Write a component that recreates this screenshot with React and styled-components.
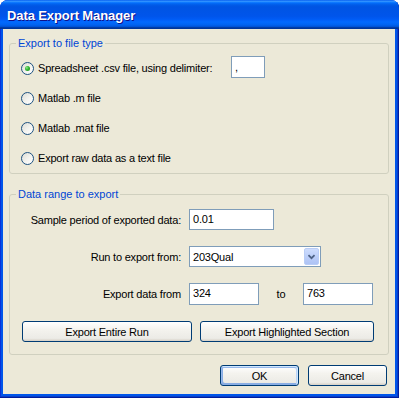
import React from "react";
import styled, { createGlobalStyle } from "styled-components";

const Global = createGlobalStyle`
  html, body { margin: 0; padding: 0; background: #ffffff; }
  body { font-family: "Liberation Sans", Tahoma, Arial, sans-serif; font-size: 11px; color: #000; }
  * { box-sizing: border-box; }
`;

const Window = styled.div`
  width: 399px;
  height: 398px;
  display: flex;
  flex-direction: column;
  border-radius: 8px 8px 0 0;
  overflow: hidden;
  background: #0055ea;
  box-shadow: inset -1px -1px #001c9c, inset 1px 0 #0831d9, inset -2px -2px #0a3fc8;
`;

const TitleBar = styled.div`
  height: 29px;
  flex-shrink: 0;
  display: flex;
  align-items: center;
  padding: 2px 0 0 7px;
  background: linear-gradient(
    180deg,
    #0058ee 0%, #3593ff 4%, #288eff 6%, #127dff 8%, #036ffc 10%,
    #0262ee 14%, #0057e5 20%, #0054e3 24%, #0055eb 56%, #005bf5 66%,
    #026afe 76%, #0062ef 86%, #0052d6 92%, #0040ab 94%, #003092 100%
  );
`;

const Title = styled.span`
  font-family: "Liberation Sans", "Trebuchet MS", sans-serif;
  font-weight: bold;
  font-size: 13px;
  letter-spacing: -0.1px;
  color: #ffffff;
  text-shadow: 1px 1px #0f1089;
`;

const Client = styled.div`
  flex: 1;
  margin: 0 4px 4px 3px;
  background: #ece9d8;
  padding: 8px 6px 0 6px;
  display: flex;
  flex-direction: column;
`;

const Group = styled.fieldset`
  margin: 0 0 ${(p) => p.$mb || 0}px 0;
  padding: 0;
  min-width: 0;
  border: 1px solid #d0d0bf;
  border-radius: 3px;
`;

const Legend = styled.legend`
  margin-left: 6px;
  padding: 0 2px;
  line-height: 13px;
  font-size: 11px;
  color: #0046d5;
`;

const OptionList = styled.div`
  display: flex;
  flex-direction: column;
  gap: 10px;
  padding: 8px 0 5px 11px;
`;

const OptionRow = styled.div`
  height: 20px;
  display: flex;
  align-items: center;
`;

const Option = styled.label`
  display: flex;
  align-items: center;
  gap: 4px;
  flex-shrink: 0;
  width: ${(p) => p.$width || "auto"};
  letter-spacing: -0.2px;
  white-space: nowrap;
`;

const Radio = styled.span`
  position: relative;
  width: 13px;
  height: 13px;
  flex-shrink: 0;
  border-radius: 50%;
  border: 1px solid #1c5180;
  background: linear-gradient(135deg, #dcdcd4 0%, #f4f4f0 55%, #ffffff 100%);
  display: flex;
  align-items: center;
  justify-content: center;
  &::after {
    content: "";
    display: ${(p) => (p.$checked ? "block" : "none")};
    width: 5px;
    height: 5px;
    border-radius: 50%;
    background: radial-gradient(circle at 35% 35%, #8ee88e 0%, #2fb42f 45%, #1b8e1b 100%);
  }
`;

const TextBox = styled.div`
  width: ${(p) => p.$w}px;
  height: ${(p) => p.$h || 21}px;
  border: 1px solid #7f9db9;
  background: #ffffff;
  padding: 2px 0 0 3px;
  font-size: ${(p) => p.$fs || 11}px;
  line-height: 15px;
  letter-spacing: -0.2px;
  flex-shrink: 0;
`;

const Delimiter = styled(TextBox)`
  margin-bottom: 3px;
  padding-top: 3px;
`;

const FormGrid = styled.div`
  display: grid;
  grid-template-columns: 171px 1fr;
  column-gap: 8px;
  row-gap: 16px;
  align-items: center;
  padding: 8px 0 12px 0;
`;

const FieldLabel = styled.span`
  text-align: right;
  letter-spacing: -0.2px;
  white-space: nowrap;
`;

const Inline = styled.div`
  display: flex;
  align-items: center;
`;

const ToLabel = styled.span`
  width: 44px;
  text-align: center;
  letter-spacing: -0.2px;
`;

const Combo = styled.div`
  width: 132px;
  height: 21px;
  border: 1px solid #7f9db9;
  background: #ffffff;
  display: flex;
  align-items: center;
  justify-content: space-between;
  padding: 0 1px 0 3px;
  letter-spacing: -0.2px;
`;

const ComboButton = styled.span`
  width: 15px;
  height: 17px;
  border-radius: 2px;
  border: 1px solid #b9cdf6;
  background: linear-gradient(180deg, #cddcfd 0%, #bccff9 50%, #aec3f5 100%);
  display: flex;
  align-items: center;
  justify-content: center;
`;

const ButtonRow = styled.div`
  grid-column: 1 / -1;
  display: flex;
  gap: 8px;
  padding-left: 12px;
`;

const Button = styled.button`
  width: ${(p) => p.$w}px;
  height: 21px;
  padding: 0;
  border: 1px solid #003c74;
  border-radius: 3px;
  background: linear-gradient(180deg, #ffffff 0%, #f4f3ee 40%, #ecebe6 86%, #d6d0c5 100%);
  font-family: "Liberation Sans", Tahoma, sans-serif;
  font-size: 11px;
  letter-spacing: -0.2px;
  color: #000;
  box-shadow: ${(p) =>
    p.$default
      ? "inset -1px 1px #cee7ff, inset 1px 2px #98b8ea, inset -2px 2px #bcd4f6, inset 1px -1px #89ade4, inset 2px -2px #89ade4"
      : "none"};
`;

const Footer = styled.div`
  display: flex;
  justify-content: flex-end;
  gap: 9px;
  margin-top: 10px;
  padding-right: 2px;
`;

const Chevron = () => (
  <svg width="15" height="17" viewBox="0 0 15 17">
    <path d="M4 7 L7.5 10.5 L11 7" fill="none" stroke="#4d6185" strokeWidth="2" />
  </svg>
);

const options = [
  "Matlab .m file",
  "Matlab .mat file",
  "Export raw data as a text file",
];

export default function App() {
  return (
    <>
      <Global />
      <Window>
        <TitleBar>
          <Title>Data Export Manager</Title>
        </TitleBar>
        <Client>
          <Group $mb={14}>
            <Legend>Export to file type</Legend>
            <OptionList>
              <OptionRow>
                <Option $width="210px">
                  <Radio $checked />
                  Spreadsheet .csv file, using delimiter:
                </Option>
                <Delimiter $w={34} $h={22}>,</Delimiter>
              </OptionRow>
              {options.map((o) => (
                <OptionRow key={o}>
                  <Option>
                    <Radio />
                    {o}
                  </Option>
                </OptionRow>
              ))}
            </OptionList>
          </Group>
          <Group>
            <Legend>Data range to export</Legend>
            <FormGrid>
              <FieldLabel>Sample period of exported data:</FieldLabel>
              <TextBox $w={85}>0.01</TextBox>
              <FieldLabel>Run to export from:</FieldLabel>
              <Combo>
                <span>203Qual</span>
                <ComboButton>
                  <Chevron />
                </ComboButton>
              </Combo>
              <FieldLabel>Export data from</FieldLabel>
              <Inline>
                <TextBox $w={70} $h={22}>324</TextBox>
                <ToLabel>to</ToLabel>
                <TextBox $w={70} $h={22}>763</TextBox>
              </Inline>
              <ButtonRow>
                <Button $w={170}>Export Entire Run</Button>
                <Button $w={174}>Export Highlighted Section</Button>
              </ButtonRow>
            </FormGrid>
          </Group>
          <Footer>
            <Button $w={79} $default>OK</Button>
            <Button $w={79}>Cancel</Button>
          </Footer>
        </Client>
      </Window>
    </>
  );
}
